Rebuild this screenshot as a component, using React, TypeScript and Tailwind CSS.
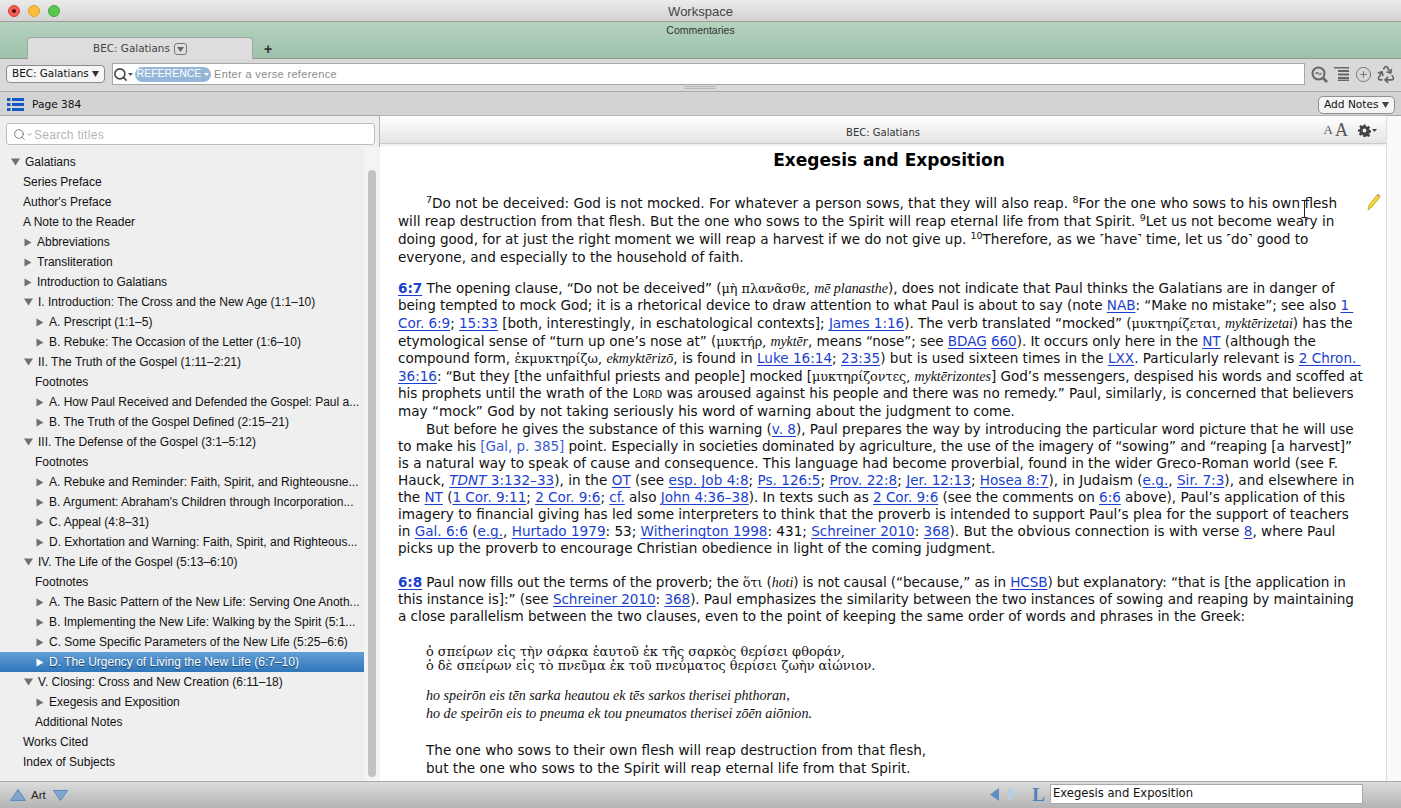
import React from 'react';
import { Search, ChevronDown, CirclePlus, Recycle } from 'lucide-react';

const sans = 'font-["Liberation_Sans",Arial,sans-serif]';
const ui = 'font-["DejaVu_Sans",sans-serif]';

type Row = { text: string; left: number; arrow?: 'right' | 'down'; selected?: boolean };

const rows: Row[] = [
  { text: 'Galatians', left: 25, arrow: 'down' },
  { text: 'Series Preface', left: 23 },
  { text: "Author's Preface", left: 23 },
  { text: 'A Note to the Reader', left: 23 },
  { text: 'Abbreviations', left: 37, arrow: 'right' },
  { text: 'Transliteration', left: 37, arrow: 'right' },
  { text: 'Introduction to Galatians', left: 37, arrow: 'right' },
  { text: 'I. Introduction: The Cross and the New Age (1:1–10)', left: 37, arrow: 'down' },
  { text: 'A. Prescript (1:1–5)', left: 49, arrow: 'right' },
  { text: 'B. Rebuke: The Occasion of the Letter (1:6–10)', left: 49, arrow: 'right' },
  { text: 'II. The Truth of the Gospel (1:11–2:21)', left: 37, arrow: 'down' },
  { text: 'Footnotes', left: 35 },
  { text: 'A. How Paul Received and Defended the Gospel: Paul a...', left: 49, arrow: 'right' },
  { text: 'B. The Truth of the Gospel Defined (2:15–21)', left: 49, arrow: 'right' },
  { text: 'III. The Defense of the Gospel (3:1–5:12)', left: 37, arrow: 'down' },
  { text: 'Footnotes', left: 35 },
  { text: 'A. Rebuke and Reminder: Faith, Spirit, and Righteousne...', left: 49, arrow: 'right' },
  { text: "B. Argument: Abraham's Children through Incorporation...", left: 49, arrow: 'right' },
  { text: 'C. Appeal (4:8–31)', left: 49, arrow: 'right' },
  { text: 'D. Exhortation and Warning: Faith, Spirit, and Righteous...', left: 49, arrow: 'right' },
  { text: 'IV. The Life of the Gospel (5:13–6:10)', left: 37, arrow: 'down' },
  { text: 'Footnotes', left: 35 },
  { text: 'A. The Basic Pattern of the New Life: Serving One Anoth...', left: 49, arrow: 'right' },
  { text: 'B. Implementing the New Life: Walking by the Spirit (5:1...', left: 49, arrow: 'right' },
  { text: 'C. Some Specific Parameters of the New Life (5:25–6:6)', left: 49, arrow: 'right' },
  { text: 'D. The Urgency of Living the New Life (6:7–10)', left: 49, arrow: 'right', selected: true },
  { text: 'V. Closing: Cross and New Creation (6:11–18)', left: 37, arrow: 'down' },
  { text: 'Exegesis and Exposition', left: 49, arrow: 'right' },
  { text: 'Additional Notes', left: 35 },
  { text: 'Works Cited', left: 23 },
  { text: 'Index of Subjects', left: 23 },
];

const L = ({ children }: { children: React.ReactNode }) => (
  <span className="text-[#1c3fd0] underline underline-offset-2 decoration-1">{children}</span>
);
const G = ({ children }: { children: React.ReactNode }) => (
  <span className='font-["DejaVu_Serif",serif] text-[12.8px]'>{children}</span>
);
const T = ({ children }: { children: React.ReactNode }) => (
  <span className='font-["Liberation_Serif",serif] italic text-[14px]'>{children}</span>
);
const Ln = ({ children, tall, indent, fit }: { children: React.ReactNode; tall?: boolean; indent?: boolean; fit?: string }) => (
  <div className={`whitespace-nowrap ${tall ? 'h-[18px] leading-[18px]' : 'h-[17px] leading-[17px]'} ${indent ? 'pl-[28px]' : ''} ${fit ?? ''}`}>
    {children}
  </div>
);

function TreeRow({ row }: { row: Row }) {
  const tri = row.left === 25 ? 'ml-[11px]' : row.left === 37 ? 'ml-[24px]' : 'ml-[36px]';
  const noArrow = row.left === 23 ? 'ml-[23px]' : 'ml-[35px]';
  return (
    <div
      className={`flex h-[20px] items-center whitespace-nowrap text-[12px] ${
        row.selected
          ? 'bg-gradient-to-b from-[#629fd6] to-[#2f76b9] text-white [text-shadow:0_1px_1px_#123f6b]'
          : 'text-[#111]'
      }`}
    >
      {row.arrow ? (
        <>
          <span className={tri}>
            {row.arrow === 'right' ? (
              <svg width="8" height="9" viewBox="0 0 8 9" className="block">
                <path d="M0.5 0.5 L7.5 4.5 L0.5 8.5Z" fill={row.selected ? '#fff' : '#6f6f6f'} />
              </svg>
            ) : (
              <svg width="9" height="8" viewBox="0 0 9 8" className="block">
                <path d="M0 0.5 L9 0.5 L4.5 7.5Z" fill="#6f6f6f" />
              </svg>
            )}
          </span>
          <span className="ml-[5px]">{row.text}</span>
        </>
      ) : (
        <span className={noArrow}>{row.text}</span>
      )}
    </div>
  );
}

function Reader() {
  return (
    <div className='flex-1 overflow-hidden pl-[18px] font-["DejaVu_Sans",sans-serif] text-[13.58px] text-[#111]'>
      <h1 className="mt-[6px] h-[21px] pr-[6px] text-center text-[17px] font-bold leading-[21px] text-black">
        Exegesis and Exposition
      </h1>
      <div className="mt-[23px]">
        <Ln tall indent><sup className="text-[9.5px]">7</sup>Do not be deceived: God is not mocked. For whatever a person sows, that they will also reap. <sup className="text-[9.5px]">8</sup>For the one who sows to his own flesh</Ln>
        <Ln tall>will reap destruction from that flesh. But the one who sows to the Spirit will reap eternal life from that Spirit. <sup className="text-[9.5px]">9</sup>Let us not become weary in</Ln>
        <Ln tall fit="tracking-[-0.04px]">doing good, for at just the right moment we will reap a harvest if we do not give up. <sup className="text-[9.5px]">10</sup>Therefore, as we ˹have˺ time, let us ˹do˺ good to</Ln>
        <Ln tall>everyone, and especially to the household of faith.</Ln>
      </div>
      <div className="mt-[13px]">
        <Ln tall fit="tracking-[-0.04px]"><L><b>6:7</b></L> The opening clause, “Do not be deceived” (<G>μὴ πλανᾶσθε,</G> <T>mē planasthe</T>), does not indicate that Paul thinks the Galatians are in danger of</Ln>
        <Ln fit="tracking-[-0.05px]">being tempted to mock God; it is a rhetorical device to draw attention to what Paul is about to say (note <L>NAB</L>: “Make no mistake”; see also <L>1&nbsp;</L></Ln>
        <Ln tall fit="tracking-[-0.05px]"><L>Cor. 6:9</L>; <L>15:33</L> [both, interestingly, in eschatological contexts]; <L>James 1:16</L>). The verb translated “mocked” (<G>μυκτηρίζεται,</G> <T>myktērizetai</T>) has the</Ln>
        <Ln tall fit="tracking-[-0.07px]">etymological sense of “turn up one’s nose at” (<G>μυκτήρ,</G> <T>myktēr</T>, means “nose”; see <L>BDAG</L> <L>660</L>). It occurs only here in the <L>NT</L> (although the</Ln>
        <Ln>compound form, <G>ἐκμυκτηρίζω,</G> <T>ekmyktērizō</T>, is found in <L>Luke 16:14</L>; <L>23:35</L>) but is used sixteen times in the <L>LXX</L>. Particularly relevant is <L>2 Chron.&nbsp;</L></Ln>
        <Ln tall fit="tracking-[-0.045px]"><L>36:16</L>: “But they [the unfaithful priests and people] mocked [<G>μυκτηρίζοντες,</G> <T>myktērizontes</T>] God’s messengers, despised his words and scoffed at</Ln>
        <Ln fit="tracking-[-0.06px]">his prophets until the wrath of the <span className="[font-variant:small-caps]">Lord</span> was aroused against his people and there was no remedy.” Paul, similarly, is concerned that believers</Ln>
        <Ln tall>may “mock” God by not taking seriously his word of warning about the judgment to come.</Ln>
        <Ln tall indent fit="tracking-[-0.04px]">But before he gives the substance of this warning (<L>v. 8</L>), Paul prepares the way by introducing the particular word picture that he will use</Ln>
        <Ln fit="tracking-[-0.08px]">to make his <span className="text-[#3a5bd0]">[Gal, p. 385]</span> point. Especially in societies dominated by agriculture, the use of the imagery of “sowing” and “reaping [a harvest]”</Ln>
        <Ln>is a natural way to speak of cause and consequence. This language had become proverbial, found in the wider Greco-Roman world (see F.</Ln>
        <Ln fit="tracking-[0.02px]">Hauck, <L><i>TDNT</i> 3:132–33</L>), in the <L>OT</L> (see <L>esp. Job 4:8</L>; <L>Ps. 126:5</L>; <L>Prov. 22:8</L>; <L>Jer. 12:13</L>; <L>Hosea 8:7</L>), in Judaism (<L>e.g.</L>, <L>Sir. 7:3</L>), and elsewhere in</Ln>
        <Ln fit="tracking-[-0.03px]">the <L>NT</L> (<L>1 Cor. 9:11</L>; <L>2 Cor. 9:6</L>; <L>cf.</L> also <L>John 4:36–38</L>). In texts such as <L>2 Cor. 9:6</L> (see the comments on <L>6:6</L> above), Paul’s application of this</Ln>
        <Ln>imagery to financial giving has led some interpreters to think that the proverb is intended to support Paul’s plea for the support of teachers</Ln>
        <Ln>in <L>Gal. 6:6</L> (<L>e.g.</L>, <L>Hurtado 1979</L>: 53; <L>Witherington 1998</L>: 431; <L>Schreiner 2010</L>: <L>368</L>). But the obvious connection is with verse <L>8</L>, where Paul</Ln>
        <Ln>picks up the proverb to encourage Christian obedience in light of the coming judgment.</Ln>
      </div>
      <div className="mt-[16px]">
        <Ln tall fit="tracking-[-0.1px]"><L><b>6:8</b></L> Paul now fills out the terms of the proverb; the <G>ὅτι</G> (<T>hoti</T>) is not causal (“because,” as in <L>HCSB</L>) but explanatory: “that is [the application in</Ln>
        <Ln fit="tracking-[-0.06px]">this instance is]:” (see <L>Schreiner 2010</L>: <L>368</L>). Paul emphasizes the similarity between the two instances of sowing and reaping by maintaining</Ln>
        <Ln fit="tracking-[-0.04px]">a close parallelism between the two clauses, even to the point of keeping the same order of words and phrases in the Greek:</Ln>
      </div>
      <div className="mt-[20px] pl-[28px]">
        <div className='font-["DejaVu_Serif",serif] text-[12.9px] leading-[14px] whitespace-nowrap'>
          <div>ὁ σπείρων εἰς τὴν σάρκα ἑαυτοῦ ἐκ τῆς σαρκὸς θερίσει φθοράν,</div>
          <div>ὁ δὲ σπείρων εἰς τὸ πνεῦμα ἐκ τοῦ πνεύματος θερίσει ζωὴν αἰώνιον.</div>
        </div>
        <div className='mt-[13px] font-["Liberation_Serif",serif] text-[14.1px] italic leading-[18px] whitespace-nowrap'>
          <div>ho speirōn eis tēn sarka heautou ek tēs sarkos therisei phthoran,</div>
          <div>ho de speirōn eis to pneuma ek tou pneumatos therisei zōēn aiōnion.</div>
        </div>
        <div className="mt-[19px] leading-[18px] whitespace-nowrap">
          <div>The one who sows to their own flesh will reap destruction from that flesh,</div>
          <div>but the one who sows to the Spirit will reap eternal life from that Spirit.</div>
        </div>
      </div>
    </div>
  );
}

export default function App() {
  return (
    <div className={`flex h-[808px] w-[1401px] flex-col overflow-hidden bg-[#d9d9d9] ${sans}`}>
      {/* title bar */}
      <div className="relative flex h-[22px] shrink-0 items-center justify-center border-b border-[#9d9d9d] bg-gradient-to-b from-[#ebebeb] to-[#d2d2d2] pt-[2px] text-[13px] text-[#444]">
        <div className="absolute left-[8px] top-[5px] flex gap-[8px]">
          <span className="flex h-[12px] w-[12px] items-center justify-center rounded-full border border-[#d9443e] bg-[#f25c54]">
            <span className="h-[4px] w-[4px] rounded-full bg-[#5c0f0c]" />
          </span>
          <span className="h-[12px] w-[12px] rounded-full border border-[#e0a028] bg-[#fbbd3b]" />
          <span className="h-[12px] w-[12px] rounded-full border border-[#3fa835] bg-[#5ac84d]" />
        </div>
        Workspace
      </div>

      {/* tab strip */}
      <div className="relative h-[37px] shrink-0 border-b border-[#8f9a93] bg-gradient-to-b from-[#b5d3be] to-[#9dc1ab]">
        <div className="pt-[2px] text-center text-[10.5px] leading-[13px] text-[#333]">Commentaries</div>
        <div className="ml-[27px] flex items-end">
          <div className={`flex h-[22px] w-[226px] items-center justify-center gap-[4px] rounded-t-[4px] border border-b-0 border-[#a3a3a3] bg-[#dedede] pt-[1px] text-[10.4px] text-[#444] ${ui}`}>
            BEC: Galatians
            <span className="flex h-[12px] w-[13px] items-center justify-center rounded-[3px] border border-[#777]">
              <svg width="7" height="5" viewBox="0 0 7 5"><path d="M0 0 L7 0 L3.5 5Z" fill="#666" /></svg>
            </span>
          </div>
          <span className="mb-[3px] ml-[11px] text-[14px] font-bold leading-[14px] text-[#333]">+</span>
        </div>
      </div>

      {/* toolbar */}
      <div className="relative flex h-[33px] shrink-0 items-center border-b border-[#a9a9a9] bg-[#d9d9d9] pb-[2px] pl-[6px]">
        <div className={`flex h-[18px] w-[99px] items-center justify-between whitespace-nowrap rounded-[4px] border border-[#8b8b8b] bg-[#f6f6f6] pl-[5px] pr-[5px] text-[10.4px] text-[#111] ${ui}`}>
          BEC: Galatians
          <svg width="7" height="6" viewBox="0 0 7 6"><path d="M0 0 L7 0 L3.5 6Z" fill="#333" /></svg>
        </div>
        <div className="ml-[7px] flex h-[22px] w-[1193px] items-center border border-[#a8a8a8] bg-white">
          <Search size={15} strokeWidth={2.5} className="text-[#444]" />
          <svg width="5" height="3" viewBox="0 0 5 3"><path d="M0 0 L5 0 L2.5 3Z" fill="#555" /></svg>
          <span className="ml-[2px] flex h-[15px] w-[76px] items-center justify-center gap-[3px] rounded-full bg-[#94b6d8] text-[10.5px] text-white">
            REFERENCE
            <svg width="5" height="3" viewBox="0 0 5 3"><path d="M0 0 L5 0 L2.5 3Z" fill="#fff" /></svg>
          </span>
          <span className="ml-[3px] text-[11px] tracking-[0.35px] text-[#8a8a8a]">Enter a verse reference</span>
        </div>
        <div className="ml-[6px] flex items-center text-[#666]">
          <svg width="17" height="17" viewBox="0 0 17 17" fill="none" stroke="#666" strokeWidth="2">
            <circle cx="7.5" cy="7.5" r="6" />
            <path d="M12 12 L16 16" strokeWidth="2.6" />
            <path d="M4.5 8 Q6 5.5 7.5 7.5 T10.5 7" strokeWidth="1.2" />
          </svg>
          <svg width="15" height="14" viewBox="0 0 15 14" className="ml-[6px]" fill="#666">
            <rect x="0" y="0" width="15" height="1.5" />
            <rect x="4" y="3" width="11" height="2" />
            <rect x="4" y="6.5" width="11" height="2" />
            <rect x="4" y="10" width="11" height="2" />
            <rect x="4" y="12.6" width="11" height="1.4" />
          </svg>
          <CirclePlus size={17} strokeWidth={1.2} className="ml-[6px] text-[#666]" />
          <Recycle size={20} strokeWidth={2} className="ml-[4px] text-[#666]" />
        </div>
        <div className="absolute bottom-[2px] left-[684px] h-[3px] w-[32px] border-y border-[#b5b5b5]" />
      </div>

      {/* page row */}
      <div className="flex h-[24px] shrink-0 items-center justify-between border-b border-[#a9a9a9] bg-[#d3d3d3] pl-[7px] pr-[6px] pt-[2px]">
        <div className="flex items-center">
          <svg width="17" height="13" viewBox="0 0 17 13" fill="#1358c8">
            <rect x="0" y="0" width="3.5" height="3" />
            <rect x="5" y="0" width="12" height="3" />
            <rect x="0" y="5" width="3.5" height="3" />
            <rect x="5" y="5" width="12" height="3" />
            <rect x="0" y="10" width="3.5" height="3" />
            <rect x="5" y="10" width="12" height="3" />
          </svg>
          <span className={`ml-[8px] text-[10.6px] text-[#111] ${ui}`}>Page 384</span>
        </div>
        <div className={`flex h-[18px] w-[77px] items-center justify-between whitespace-nowrap rounded-[5px] border border-[#8f8f8f] bg-[#f4f4f4] px-[5px] text-[10.6px] text-[#111] ${ui}`}>
          Add Notes
          <svg width="7" height="6" viewBox="0 0 7 6"><path d="M0 0 L7 0 L3.5 6Z" fill="#444" /></svg>
        </div>
      </div>

      {/* main */}
      <div className="flex min-h-0 flex-1">
        <aside className="flex w-[380px] shrink-0 flex-col border-r border-[#9f9f9f] bg-[#efefef]">
          <div className="px-[6px] pr-[4px] pt-[7px]">
            <div className="flex h-[22px] items-center rounded-[3px] border border-[#bdbdbd] bg-white pl-[6px] pt-[1px] text-[12px] text-[#b5b5b5]">
              <Search size={13} strokeWidth={1.5} className="text-[#666]" />
              <ChevronDown size={7} strokeWidth={2} className="text-[#666]" />
              <span className="ml-[1px] tracking-[0.3px]">Search titles</span>
            </div>
          </div>
          <div className="flex min-h-0 flex-1 pt-[2px]">
            <div className="w-[364px] shrink-0 pt-[5px]">
              {rows.map((row, i) => (
                <TreeRow key={i} row={row} />
              ))}
            </div>
            <div className="flex-1 bg-[#f4f4f4] px-[4px] pb-[4px] pt-[23px]">
              <div className="h-full w-[8px] rounded-full bg-[#c2c2c2]" />
            </div>
          </div>
        </aside>

        <main className="relative flex min-w-0 flex-1 flex-col bg-white">
          <div className="flex min-h-0 flex-1">
            <div className="flex min-w-0 flex-1 flex-col">
              <div className={`relative flex h-[28px] shrink-0 items-center justify-center border-b border-[#c9c9c9] bg-gradient-to-b from-white to-[#e4e4e4] pt-[5px] text-[10px] text-[#333] shadow-[0_1px_3px_#e4e4e4] ${ui}`}>
                BEC: Galatians
                <div className="absolute right-[9px] top-[6px] flex items-center text-[#555]">
                  <span className='font-["Liberation_Serif",serif] text-[13px] leading-[16px]'>A</span>
                  <span className='ml-[2px] font-["Liberation_Serif",serif] text-[18px] leading-[16px]'>A</span>
                  <svg width="13" height="13" viewBox="0 0 24 24" className="ml-[10px]" fill="#444">
                    <path d="M10 1h4l.7 3.4 2 .8L19.6 3.3l2.8 2.8-1.9 2.9.8 2 3.4.7v4l-3.4.7-.8 2 1.9 2.9-2.8 2.8-2.9-1.9-2 .8L14 24h-4l-.7-3.4-2-.8-2.9 1.9-2.8-2.8 1.9-2.9-.8-2L0 14.3v-4l3.4-.7.8-2L2.3 4.7l2.8-2.8L8 3.8l2-.8zM12 8.5a3.5 3.5 0 100 7 3.5 3.5 0 000-7z" />
                  </svg>
                  <svg width="5" height="3" viewBox="0 0 5 3" className="ml-[1px]"><path d="M0 0 L5 0 L2.5 3Z" fill="#444" /></svg>
                </div>
              </div>
              <Reader />
            </div>
            <div className="w-[15px] shrink-0 border-l border-[#dedede] bg-[#fafafa]" />
          </div>
          {/* pencil mark and text cursor over the page */}
          <svg width="14" height="18" viewBox="0 0 14 18" className="absolute left-[987px] top-[77px]">
            <path d="M1 17 L2 12 L10 2 L13 4 L5 14Z" fill="#f2d43c" stroke="#b39b1e" strokeWidth="0.7" />
            <path d="M10 2 L11 0.8 L13.6 2.6 L13 4Z" fill="#e58aa8" />
          </svg>
          <svg width="7" height="18" viewBox="0 0 7 18" className="absolute left-[921px] top-[84px]">
            <path d="M0.5 0.5 H6.5 M3.5 0.5 V17.5 M0.5 17.5 H6.5" stroke="#222" fill="none" strokeWidth="1" />
          </svg>
        </main>
      </div>

      {/* bottom bar */}
      <div className="flex h-[27px] shrink-0 items-center border-t border-[#a9a9a9] bg-gradient-to-b from-[#dcdcdc] to-[#b4b4b4] pl-[10px]">
        <svg width="16" height="12" viewBox="0 0 16 12"><path d="M8 0.5 L15.5 11.5 L0.5 11.5Z" fill="#7fa6d0" stroke="#5e88b5" /></svg>
        <span className="ml-[5px] pt-[2px] text-[11.5px] text-[#222]">Art</span>
        <svg width="15" height="11" viewBox="0 0 15 11" className="ml-[7px]"><path d="M0.5 0.5 L14.5 0.5 L7.5 10.5Z" fill="#7fa6d0" stroke="#5e88b5" /></svg>
        <div className="ml-auto flex items-center pb-[2px] pr-[38px]">
          <svg width="9" height="13" viewBox="0 0 9 13"><path d="M9 0 L0 6.5 L9 13Z" fill="#5d8fc6" /></svg>
          <svg width="9" height="13" viewBox="0 0 9 13" className="ml-[9px]"><path d="M0 0 L9 6.5 L0 13Z" fill="#b6cde4" /></svg>
          <span className='ml-[15px] font-["Liberation_Serif",serif] text-[19px] font-bold leading-[19px] text-[#4f82ba]'>L</span>
          <div className={`ml-[5px] flex h-[20px] w-[313px] items-center border border-[#a9a9a9] bg-white pl-[2px] text-[11.6px] text-[#111] ${ui}`}>
            Exegesis and Exposition
          </div>
        </div>
      </div>
    </div>
  );
}
